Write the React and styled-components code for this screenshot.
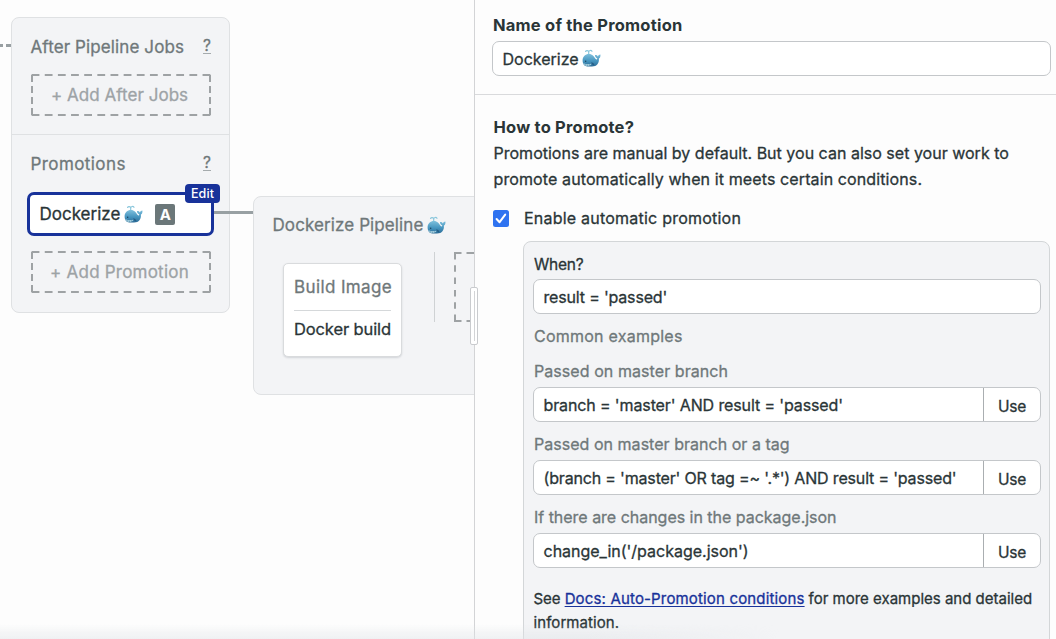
import React from 'react';
import styled, { createGlobalStyle } from 'styled-components';

const ink = '#2a3537';
const muted = '#6f787a';
const faint = '#9da3a6';
const navy = '#18329a';
const cardBg = '#f3f4f6';
const cardLine = '#dfe1e3';
const fieldLine = '#c4c7ca';

const GlobalStyle = createGlobalStyle`
  *, *::before, *::after { box-sizing: border-box; }
  html, body { margin: 0; height: 100%; overflow: hidden; }
  body { background: #fdfdfd; color: ${ink}; font-family: Inter, "Liberation Sans", sans-serif; }
`;

const Screen = styled.div`
  position: relative;
  display: flex;
  width: 1056px;
  height: 639px;
  overflow: hidden;
`;

const Text = styled.span`
  font-size: ${(p) => p.$size || 16}px;
  font-weight: ${(p) => p.$weight || 400};
  letter-spacing: ${(p) => p.$track || 0}px;
  color: ${(p) => p.$color || ink};
  -webkit-text-stroke: ${(p) => (p.$weight >= 600 ? 0 : 0.3)}px currentColor;
  white-space: nowrap;
`;

const WhaleIcon = styled.svg`
  flex: none;
  width: 19px;
  height: 19px;
  margin-left: ${(p) => p.$gap}px;
`;

/* Workflow canvas */

const Canvas = styled.main`
  position: relative;
  width: 474px;
  height: 639px;
  overflow: hidden;
`;

const Wire = styled.svg`
  position: absolute;
  left: 0;
  top: 0;
`;

const Node = styled.section`
  position: absolute;
  left: ${(p) => p.$x}px;
  top: ${(p) => p.$y}px;
  width: ${(p) => p.$w}px;
  height: ${(p) => p.$h}px;
  background: ${cardBg};
  border: 1px solid ${cardLine};
  border-radius: 8px;
`;

const NodeSection = styled.div`
  height: ${(p) => p.$h}px;
  padding: 0 18px;
  & + & { border-top: 1px solid ${cardLine}; }
`;

const SectionHead = styled.header`
  display: flex;
  align-items: center;
  justify-content: space-between;
  padding-top: ${(p) => p.$top}px;
  padding-left: 0.5px;
  height: ${(p) => p.$top + 24}px;
`;

const Help = styled.span`
  width: 8px;
  margin: 0 0 2px;
  color: ${muted};
  font-size: 15.5px;
  line-height: 15px;
  text-align: center;
  border-bottom: 1px solid #a5abad;
  -webkit-text-stroke: 0.3px currentColor;
`;

const AddBox = styled.button`
  display: grid;
  place-items: center;
  width: 180px;
  height: 42px;
  margin: ${(p) => p.$top}px 0 0 1px;
  padding: 0;
  border: 0;
  background: none;
  font-family: inherit;
  & > * { grid-area: 1 / 1; }
  & > span { margin-right: 3px; }
`;

const Promotion = styled.div`
  position: relative;
  display: flex;
  align-items: center;
  width: 187px;
  height: 44px;
  margin: 16px 0 0 -3px;
  padding: 0 0 0 9.5px;
  background: #fff;
  border: 3.5px solid ${navy};
  border-radius: 7px;
`;

const EditBadge = styled.span`
  position: absolute;
  top: -11px;
  right: -9px;
  width: 35px;
  height: 19px;
  border-radius: 4px;
  background: ${navy};
  color: #fff;
  font-size: 12.5px;
  font-weight: 500;
  letter-spacing: 0.1px;
  line-height: 19px;
  text-align: center;
`;

const AutoMark = styled.span`
  width: 20px;
  height: 21px;
  margin: 1px 0 0 12px;
  border-radius: 2px;
  background: #6b7779;
  color: #fff;
  font-size: 15px;
  font-weight: 700;
  line-height: 21px;
  text-align: center;
`;

const PipelineTitle = styled.header`
  display: flex;
  align-items: center;
  height: 24px;
  margin: 16px 0 0 18.5px;
`;

const PipelineBody = styled.div`
  display: flex;
  align-items: flex-start;
  margin: 15px 0 0 29px;
`;

const BlockCard = styled.article`
  flex: none;
  width: 119px;
  height: 94px;
  margin-top: 11px;
  padding: 0 10px;
  background: #fff;
  border: 1px solid #d9dbdd;
  border-radius: 5px;
  box-shadow: 0 1px 2px rgba(40, 50, 60, 0.16);
`;

const BlockName = styled.div`
  display: flex;
  align-items: center;
  height: 47px;
  border-bottom: 1px solid #d5d8da;
`;

const BlockJob = styled.div`
  display: flex;
  align-items: center;
  height: 36px;
`;

const BlockRule = styled.div`
  flex: none;
  width: 1px;
  height: 70px;
  margin: 0 19px 0 32px;
  background: #cfd2d4;
`;

const BlockSlot = styled.svg`
  flex: none;
`;

/* Settings panel */

const Panel = styled.aside`
  width: 582px;
  height: 639px;
  border-left: 1px solid #d3d4d6;
  background: #fdfdfd;
`;

const NameSection = styled.section`
  height: 95px;
  padding: 12px 5px 0 17px;
  border-bottom: 1px solid #d9dadc;
`;

const Label = styled.label`
  display: flex;
  align-items: center;
  height: ${(p) => p.$h || 22}px;
  margin-top: ${(p) => p.$top || 0}px;
  padding-left: 1px;
`;

const Field = styled.div`
  display: flex;
  align-items: center;
  height: 35px;
  margin-top: ${(p) => p.$top || 0}px;
  padding-left: 9.5px;
  background: #fff;
  border: 1px solid ${fieldLine};
  border-radius: 7px;
`;

const FieldValue = styled.div`
  display: flex;
  flex: 1;
  align-items: center;
`;

const UseButton = styled.button`
  width: 57px;
  height: 33px;
  padding: 3px 0 0;
  border: 0;
  border-left: 1px solid #aaaeb1;
  background: none;
  font-family: inherit;
`;

const RuleSection = styled.section`
  padding: 19px 6px 0 18px;
`;

const Line = styled.div`
  display: flex;
  align-items: center;
  height: ${(p) => p.$h || 26}px;
  padding-left: 0.5px;
`;

const CheckRow = styled.div`
  display: flex;
  align-items: center;
  gap: 15px;
  height: 26px;
  margin-top: 13px;
`;

const Conditions = styled.div`
  height: 420px;
  margin: 10px 0 0 30px;
  padding: 11px 8px 0 9px;
  background: ${cardBg};
  border: 1px solid #d3d6d8;
  border-radius: 8px;
`;

const DocsNote = styled.p`
  margin: 18px 0 0;
`;

const DocsLink = styled.a`
  margin: 0 4px 0 4px;
  color: ${navy};
  text-decoration: underline;
  text-decoration-thickness: 1px;
  text-underline-offset: 2px;
`;

const ResizeHandle = styled.div`
  position: absolute;
  left: 470px;
  top: 287px;
  width: 8px;
  height: 58px;
  padding: 3px 2px;
  background: #fff;
  border: 1px solid #c9cbce;
  border-radius: 2px;
  &::after {
    content: '';
    display: block;
    width: 1px;
    height: 50px;
    margin-left: 1px;
    background: #d3d4d6;
  }
`;

const BottomShade = styled.div`
  position: absolute;
  left: 0;
  bottom: 0;
  width: 780px;
  height: 15px;
  background: linear-gradient(to bottom, rgba(225, 228, 232, 0), rgba(225, 228, 232, 0.5));
  mask-image: linear-gradient(to right, #000 75%, transparent);
`;

const Outline = () => (
  <svg width="180" height="42" viewBox="0 0 180 42" fill="none" stroke="#9ea2a4" strokeWidth="2">
    <path d="M.6 1H179.4M.6 41H179.4" strokeDasharray="7.8 5.35" />
    <path d="M1 1V41M179 1V41" strokeDasharray="7 4" />
  </svg>
);

const Whale = ({ gap = 4 }) => (
  <WhaleIcon $gap={gap} viewBox="0 0 19 19" role="img" aria-label="🐳">
    <defs>
      <linearGradient id="whaleBody" x1="0" y1="0" x2="0" y2="1">
        <stop offset="0" stopColor="#7dbfdc" />
        <stop offset="0.55" stopColor="#4695bf" />
        <stop offset="1" stopColor="#2c6c97" />
      </linearGradient>
    </defs>
    <path d="M6.7 5V2.9C6.3 1.4 4.4 1.2 3.6 2.4M6.7 2.9C7.2 1.2 9.2 1 10 2.3" fill="none" stroke="#8bc7dc" strokeWidth="1.2" strokeLinecap="round" />
    <path d="M.6 11.6C.6 7.5 3.4 5.1 6.9 5.1c3.6 0 5 2.6 6.6 4.7.9 1.1 1.7.7 1.8-.4-1.500-.6-2.500-1.800-2.300-3.300 1.300-.1 2.300.4 2.900 1.300.4-1.200 1.200-1.900 2.500-2 .3 1.900-.3 3.300-1.500 4.100.4 4.600-1.900 8-6.900 8H5.600C2.300 17.500.6 15 .6 11.600Z" fill="url(#whaleBody)" />
    <path d="M1.300 14.200c2.200.9 5.600 1.200 8.200.5-.6 1.600-2 2.500-4.300 2.500-1.900 0-3.200-1.200-3.900-3Z" fill="#a4cfdf" />
    <path d="M3 15.200l.6 1.300M5.200 15.500l.2 1.600M7.400 15.400l-.2 1.500" stroke="#3a7699" strokeWidth=".6" />
    <circle cx="3.700" cy="12.300" r=".7" fill="#173c57" />
    <path d="M9.200 13.300c.4 1.800 1.500 3 3 3.300.3-1.600-.7-2.900-3-3.300Z" fill="#245d86" />
  </WhaleIcon>
);

const examples = [
  { label: 'Passed on master branch', lt: 0.07, value: "branch = 'master' AND result = 'passed'", vt: -0.12, top: 13 },
  { label: 'Passed on master branch or a tag', lt: 0.03, value: "(branch = 'master' OR tag =~ '.*') AND result = 'passed'", vt: -0.17, top: 11 },
  { label: 'If there are changes in the package.json', lt: -0.02, value: "change_in('/package.json')", vt: -0.01, top: 11 },
];

export default function App() {
  return (
    <>
      <GlobalStyle />
      <Screen>
        <Canvas>
          <Wire width="474" height="300" stroke="#989fa2" strokeWidth="3">
            <path d="M0 45.5H3M6 45.5H11" />
          </Wire>
          <Node $x={11} $y={17} $w={219} $h={296}>
            <NodeSection $h={116}>
              <SectionHead $top={17}>
                <Text $size={17} $track={0.11} $color={muted}>After Pipeline Jobs</Text>
                <Help>?</Help>
              </SectionHead>
              <AddBox $top={15}>
                <Outline />
                <Text $size={17} $track={0.04} $color={faint}>+ Add After Jobs</Text>
              </AddBox>
            </NodeSection>
            <NodeSection $h={178}>
              <SectionHead $top={17}>
                <Text $size={17} $track={0.42} $color={muted}>Promotions</Text>
                <Help>?</Help>
              </SectionHead>
              <Promotion>
                <Text $size={17}>Dockerize</Text>
                <Whale gap={4} />
                <AutoMark>A</AutoMark>
                <EditBadge>Edit</EditBadge>
              </Promotion>
              <AddBox $top={15}>
                <Outline />
                <Text $size={17} $track={0.22} $color={faint}>+ Add Promotion</Text>
              </AddBox>
            </NodeSection>
          </Node>
          <Wire width="474" height="300" stroke="#98a0a3" strokeWidth="3">
            <path d="M214 212.5H253" />
          </Wire>
          <Node $x={253} $y={196} $w={260} $h={199}>
            <PipelineTitle>
              <Text $size={17} $track={0.1} $color={muted}>Dockerize Pipeline</Text>
              <Whale gap={4} />
            </PipelineTitle>
            <PipelineBody>
              <BlockCard>
                <BlockName><Text $size={17} $track={0.38} $color={muted}>Build Image</Text></BlockName>
                <BlockJob><Text $size={16.5} $track={-0.12}>Docker build</Text></BlockJob>
              </BlockCard>
              <BlockRule />
              <BlockSlot width="60" height="70" fill="none" stroke="#9ea2a4" strokeWidth="2">
                <path d="M0 1H60M0 69H60" strokeDasharray="7.5 5" />
                <path d="M1 1V69" strokeDasharray="6.5 5.8" />
              </BlockSlot>
            </PipelineBody>
          </Node>
        </Canvas>

        <Panel>
          <NameSection>
            <Label $h={26}><Text $size={16.5} $weight={700} $track={0.22}>Name of the Promotion</Text></Label>
            <Field $top={3}><Text>Dockerize</Text><Whale gap={3} /></Field>
          </NameSection>
          <RuleSection>
            <Line $h={26}><Text $size={16.5} $weight={700} $track={0.22}>How to Promote?</Text></Line>
            <Line><Text $track={0.01}>Promotions are manual by default. But you can also set your work to</Text></Line>
            <Line><Text $track={0.11}>promote automatically when it meets certain conditions.</Text></Line>
            <CheckRow>
              <svg width="16" height="17" viewBox="0 0 16 17">
                <rect width="16" height="17" rx="2.5" fill="#2f73f0" />
                <path d="M3.6 9l3 3.2 5.6-7.6" fill="none" stroke="#fff" strokeWidth="2" strokeLinecap="round" strokeLinejoin="round" />
              </svg>
              <Text $track={0.22}>Enable automatic promotion</Text>
            </CheckRow>
            <Conditions>
              <Label><Text $size={15.5} $track={-0.2}>When?</Text></Label>
              <Field $top={4}><Text $track={-0.17}>result = 'passed'</Text></Field>
              <Label $top={11}><Text $track={0.24} $color={muted}>Common examples</Text></Label>
              {examples.map((e) => (
                <React.Fragment key={e.label}>
                  <Label $top={e.top}><Text $track={e.lt} $color={muted}>{e.label}</Text></Label>
                  <Field $top={5}>
                    <FieldValue><Text $track={e.vt}>{e.value}</Text></FieldValue>
                    <UseButton><Text $size={15.5} $track={-0.2}>Use</Text></UseButton>
                  </Field>
                </React.Fragment>
              ))}
              <DocsNote as="div">
                <Line $h={24}>
                  <Text $size={15}>See</Text>
                  <DocsLink><Text $size={15} $track={0.16} $color={navy}>Docs: Auto-Promotion conditions</Text></DocsLink>
                  <Text $size={15}>for more examples and detailed</Text>
                </Line>
                <Line $h={24}><Text $size={15} $track={0.07}>information.</Text></Line>
              </DocsNote>
            </Conditions>
          </RuleSection>
        </Panel>
        <ResizeHandle />
        <BottomShade />
      </Screen>
    </>
  );
}
